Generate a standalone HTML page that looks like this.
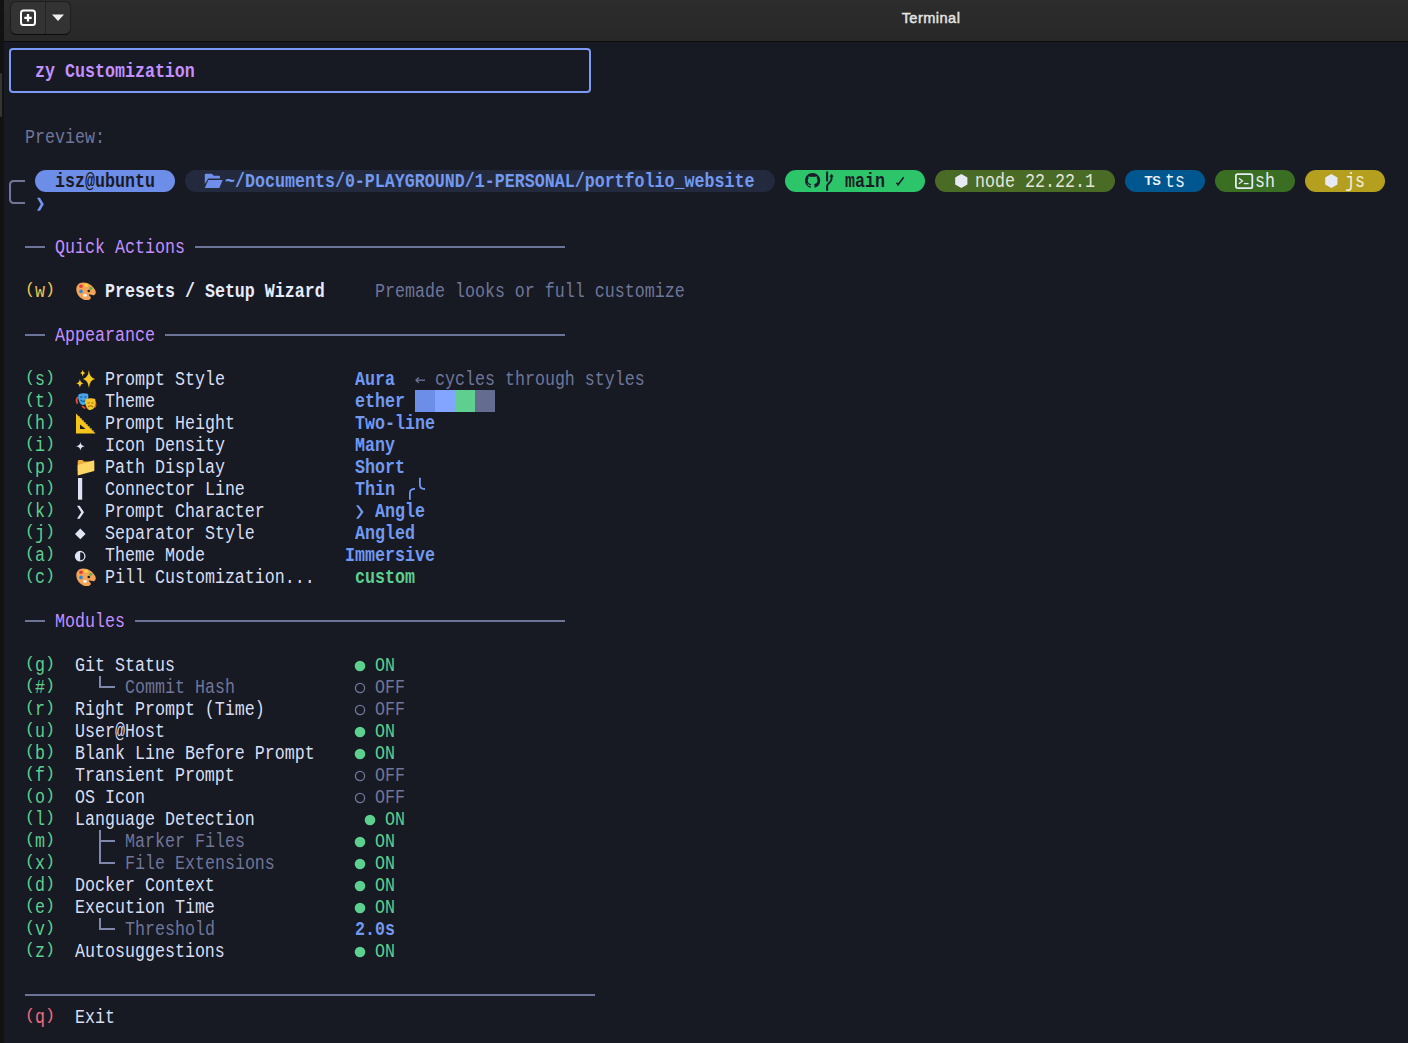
<!DOCTYPE html>
<html><head><meta charset="utf-8"><style>
html,body{margin:0;padding:0;}
body{width:1408px;height:1043px;overflow:hidden;position:relative;background:#171923;font-family:"Liberation Mono",monospace;}
.t{position:absolute;white-space:pre;font-size:19.3px;line-height:22px;transform:scaleX(0.86342);transform-origin:0 0;}
</style></head><body>
<div style="position:absolute;left:0;top:0;width:4px;height:1043px;background:#121212;"></div>
<div style="position:absolute;left:4px;top:0;width:1404px;height:41px;background:linear-gradient(#2c2c2c,#282828);"></div>
<div style="position:absolute;left:0;top:73px;width:1.5px;height:44px;background:#353535;border-radius:1px;"></div>
<div style="position:absolute;left:4px;top:41px;width:1404px;height:1px;background:#0b0b0b;"></div>
<div style="position:absolute;left:11px;top:2px;width:59px;height:32px;background:#333;border-radius:5px;box-shadow:0 0 0 1px rgba(0,0,0,0.3),0 1px 0 #111;"></div>
<div style="position:absolute;left:45px;top:2px;width:1px;height:32px;background:#222;"></div>
<svg style="position:absolute;left:19px;top:9px" width="18" height="18" viewBox="0 0 18 18"><rect x="2" y="1.5" width="14" height="14.5" rx="2.5" fill="none" stroke="#fff" stroke-width="2"/><path d="M9 5V12.5M5.3 8.8H12.7" stroke="#fff" stroke-width="2.3"/></svg>
<svg style="position:absolute;left:50px;top:13px" width="16" height="10" viewBox="0 0 16 10"><path d="M2 1.5H14L8 8Z" fill="#eee"/></svg>
<div style="position:absolute;left:871px;top:9.7px;width:120px;text-align:center;font-family:'Liberation Sans',sans-serif;font-weight:normal;-webkit-text-stroke:0.45px #e4e4e4;font-size:14.6px;letter-spacing:0.45px;color:#e4e4e4;">Terminal</div>
<div style="position:absolute;left:4px;top:42px;width:1404px;height:1001px;background:#171923;"></div>
<div style="position:absolute;left:9px;top:48px;width:578px;height:41px;border:2px solid #7a9af5;border-radius:4px;"></div>
<div class="t" style="left:35px;top:60.96427px;color:#c290ff;font-weight:bold;">zy Customization</div>
<div class="t" style="left:25px;top:126.96427px;color:#6f7699;">Preview:</div>
<svg style="position:absolute;left:8px;top:179px;" width="20" height="27" viewBox="0 0 20 27"><path d="M17 2 H6 Q2 2 2 6 V20 Q2 24 6 24 H17" fill="none" stroke="#70779a" stroke-width="2"/></svg>
<svg style="position:absolute;left:35px;top:196px;" width="12" height="16" viewBox="0 0 12 16"><path d="M2 1.8 H5 L8.8 8.3 L5 14.8 H2 L5.8 8.3 Z" fill="#7096f0"/></svg>
<div style="position:absolute;left:35px;top:170px;width:140px;height:22px;background:#6d8ee8;border-radius:11px;"></div>
<div class="t" style="left:55px;top:170.96427px;color:#1a1b26;font-weight:bold;">isz@ubuntu</div>
<div style="position:absolute;left:185px;top:170px;width:590px;height:22px;background:#242a3e;border-radius:11px;"></div>
<div class="t" style="left:225px;top:170.96427px;color:#7199f2;font-weight:bold;">~/Documents/0-PLAYGROUND/1-PERSONAL/portfolio_website</div>
<div style="position:absolute;left:785px;top:170px;width:140px;height:22px;background:#2cc56a;border-radius:11px;"></div>
<div class="t" style="left:845px;top:170.96427px;color:#1a1b26;font-weight:bold;">main</div>
<div style="position:absolute;left:935px;top:170px;width:180px;height:22px;background:#4a6b25;border-radius:11px;"></div>
<div class="t" style="left:975px;top:170.96427px;color:#e4e6dc;">node 22.22.1</div>
<div style="position:absolute;left:1125px;top:170px;width:80px;height:22px;background:#00578f;border-radius:11px;"></div>
<div class="t" style="left:1165px;top:170.96427px;color:#eef2f8;">ts</div>
<div style="position:absolute;left:1215px;top:170px;width:80px;height:22px;background:#3a6e22;border-radius:11px;"></div>
<div class="t" style="left:1255px;top:170.96427px;color:#e8ecf0;">sh</div>
<div style="position:absolute;left:1305px;top:170px;width:80px;height:22px;background:#b4a01e;border-radius:11px;"></div>
<div class="t" style="left:1345px;top:170.96427px;color:#f2f0e0;">js</div>
<div style="position:absolute;left:25px;top:246.0px;width:20px;height:2px;background:#6b7396;"></div>
<div class="t" style="left:55px;top:236.96427px;color:#c290ff;">Quick Actions</div>
<div style="position:absolute;left:195px;top:246.0px;width:370px;height:2px;background:#6b7396;"></div>
<div class="t" style="left:25px;top:280.16427px;color:#f0c450;transform:scale(0.86342,0.9);transform-origin:0 0;">(</div>
<div class="t" style="left:45px;top:280.16427px;color:#f0c450;transform:scale(0.86342,0.9);transform-origin:0 0;">)</div>
<div class="t" style="left:35px;top:280.96427px;color:#f0c450;">w</div>
<div class="t" style="left:105px;top:280.96427px;color:#e6ebff;font-weight:bold;">Presets / Setup Wizard</div>
<div class="t" style="left:375px;top:280.96427px;color:#6f7699;">Premade looks or full customize</div>
<div style="position:absolute;left:25px;top:334.0px;width:20px;height:2px;background:#6b7396;"></div>
<div class="t" style="left:55px;top:324.96427px;color:#c290ff;">Appearance</div>
<div style="position:absolute;left:165px;top:334.0px;width:400px;height:2px;background:#6b7396;"></div>
<div class="t" style="left:25px;top:368.16427px;color:#5cd08e;transform:scale(0.86342,0.9);transform-origin:0 0;">(</div>
<div class="t" style="left:45px;top:368.16427px;color:#5cd08e;transform:scale(0.86342,0.9);transform-origin:0 0;">)</div>
<div class="t" style="left:35px;top:368.96427px;color:#5cd08e;">s</div>
<div class="t" style="left:105px;top:368.96427px;color:#d8dff5;">Prompt Style</div>
<div class="t" style="left:355px;top:368.96427px;color:#7199f2;font-weight:bold;">Aura</div>
<div class="t" style="left:25px;top:390.16427px;color:#5cd08e;transform:scale(0.86342,0.9);transform-origin:0 0;">(</div>
<div class="t" style="left:45px;top:390.16427px;color:#5cd08e;transform:scale(0.86342,0.9);transform-origin:0 0;">)</div>
<div class="t" style="left:35px;top:390.96427px;color:#5cd08e;">t</div>
<div class="t" style="left:105px;top:390.96427px;color:#d8dff5;">Theme</div>
<div class="t" style="left:355px;top:390.96427px;color:#7199f2;font-weight:bold;">ether</div>
<div class="t" style="left:25px;top:412.16427px;color:#5cd08e;transform:scale(0.86342,0.9);transform-origin:0 0;">(</div>
<div class="t" style="left:45px;top:412.16427px;color:#5cd08e;transform:scale(0.86342,0.9);transform-origin:0 0;">)</div>
<div class="t" style="left:35px;top:412.96427px;color:#5cd08e;">h</div>
<div class="t" style="left:105px;top:412.96427px;color:#d8dff5;">Prompt Height</div>
<div class="t" style="left:355px;top:412.96427px;color:#7199f2;font-weight:bold;">Two-line</div>
<div class="t" style="left:25px;top:434.16427px;color:#5cd08e;transform:scale(0.86342,0.9);transform-origin:0 0;">(</div>
<div class="t" style="left:45px;top:434.16427px;color:#5cd08e;transform:scale(0.86342,0.9);transform-origin:0 0;">)</div>
<div class="t" style="left:35px;top:434.96427px;color:#5cd08e;">i</div>
<div class="t" style="left:105px;top:434.96427px;color:#d8dff5;">Icon Density</div>
<div class="t" style="left:355px;top:434.96427px;color:#7199f2;font-weight:bold;">Many</div>
<div class="t" style="left:25px;top:456.16427px;color:#5cd08e;transform:scale(0.86342,0.9);transform-origin:0 0;">(</div>
<div class="t" style="left:45px;top:456.16427px;color:#5cd08e;transform:scale(0.86342,0.9);transform-origin:0 0;">)</div>
<div class="t" style="left:35px;top:456.96427px;color:#5cd08e;">p</div>
<div class="t" style="left:105px;top:456.96427px;color:#d8dff5;">Path Display</div>
<div class="t" style="left:355px;top:456.96427px;color:#7199f2;font-weight:bold;">Short</div>
<div class="t" style="left:25px;top:478.16427px;color:#5cd08e;transform:scale(0.86342,0.9);transform-origin:0 0;">(</div>
<div class="t" style="left:45px;top:478.16427px;color:#5cd08e;transform:scale(0.86342,0.9);transform-origin:0 0;">)</div>
<div class="t" style="left:35px;top:478.96427px;color:#5cd08e;">n</div>
<div class="t" style="left:105px;top:478.96427px;color:#d8dff5;">Connector Line</div>
<div class="t" style="left:355px;top:478.96427px;color:#7199f2;font-weight:bold;">Thin</div>
<div class="t" style="left:25px;top:500.16427px;color:#5cd08e;transform:scale(0.86342,0.9);transform-origin:0 0;">(</div>
<div class="t" style="left:45px;top:500.16427px;color:#5cd08e;transform:scale(0.86342,0.9);transform-origin:0 0;">)</div>
<div class="t" style="left:35px;top:500.96427px;color:#5cd08e;">k</div>
<div class="t" style="left:105px;top:500.96427px;color:#d8dff5;">Prompt Character</div>
<div class="t" style="left:375px;top:500.96427px;color:#7199f2;font-weight:bold;">Angle</div>
<div class="t" style="left:25px;top:522.16427px;color:#5cd08e;transform:scale(0.86342,0.9);transform-origin:0 0;">(</div>
<div class="t" style="left:45px;top:522.16427px;color:#5cd08e;transform:scale(0.86342,0.9);transform-origin:0 0;">)</div>
<div class="t" style="left:35px;top:522.9642699999999px;color:#5cd08e;">j</div>
<div class="t" style="left:105px;top:522.9642699999999px;color:#d8dff5;">Separator Style</div>
<div class="t" style="left:355px;top:522.9642699999999px;color:#7199f2;font-weight:bold;">Angled</div>
<div class="t" style="left:25px;top:544.16427px;color:#5cd08e;transform:scale(0.86342,0.9);transform-origin:0 0;">(</div>
<div class="t" style="left:45px;top:544.16427px;color:#5cd08e;transform:scale(0.86342,0.9);transform-origin:0 0;">)</div>
<div class="t" style="left:35px;top:544.9642699999999px;color:#5cd08e;">a</div>
<div class="t" style="left:105px;top:544.9642699999999px;color:#d8dff5;">Theme Mode</div>
<div class="t" style="left:345px;top:544.9642699999999px;color:#7199f2;font-weight:bold;">Immersive</div>
<div class="t" style="left:25px;top:566.16427px;color:#5cd08e;transform:scale(0.86342,0.9);transform-origin:0 0;">(</div>
<div class="t" style="left:45px;top:566.16427px;color:#5cd08e;transform:scale(0.86342,0.9);transform-origin:0 0;">)</div>
<div class="t" style="left:35px;top:566.9642699999999px;color:#5cd08e;">c</div>
<div class="t" style="left:105px;top:566.9642699999999px;color:#d8dff5;">Pill Customization...</div>
<div class="t" style="left:355px;top:566.9642699999999px;color:#5cd08e;font-weight:bold;">custom</div>
<div class="t" style="left:435px;top:368.96427px;color:#6f7699;">cycles through styles</div>
<svg style="position:absolute;left:413px;top:374px;" width="14" height="12" viewBox="0 0 14 12"><path d="M3 6.2 H12" stroke="#6f7699" stroke-width="1.3"/><path d="M5.8 3.5 L3 6.2 L5.8 8.9" fill="none" stroke="#6f7699" stroke-width="1.3"/></svg>
<div style="position:absolute;left:415px;top:390px;width:20px;height:22px;background:#6d8ee8;"></div>
<div style="position:absolute;left:435px;top:390px;width:20px;height:22px;background:#82a6ff;"></div>
<div style="position:absolute;left:455px;top:390px;width:20px;height:22px;background:#5fcf8f;"></div>
<div style="position:absolute;left:475px;top:390px;width:20px;height:22px;background:#646d8f;"></div>
<div style="position:absolute;left:25px;top:620.0px;width:20px;height:2px;background:#6b7396;"></div>
<div class="t" style="left:55px;top:610.9642699999999px;color:#c290ff;">Modules</div>
<div style="position:absolute;left:135px;top:620.0px;width:430px;height:2px;background:#6b7396;"></div>
<div class="t" style="left:25px;top:654.16427px;color:#5cd08e;transform:scale(0.86342,0.9);transform-origin:0 0;">(</div>
<div class="t" style="left:45px;top:654.16427px;color:#5cd08e;transform:scale(0.86342,0.9);transform-origin:0 0;">)</div>
<div class="t" style="left:35px;top:654.9642699999999px;color:#5cd08e;">g</div>
<div class="t" style="left:75px;top:654.9642699999999px;color:#d8dff5;">Git Status</div>
<svg style="position:absolute;left:353.1px;top:659.2px;" width="14" height="14" viewBox="0 0 14 14"><circle cx="7" cy="7" r="5.3" fill="#5cd08e"/></svg>
<div class="t" style="left:375px;top:654.9642699999999px;color:#5cd08e;">ON</div>
<div class="t" style="left:25px;top:676.16427px;color:#5cd08e;transform:scale(0.86342,0.9);transform-origin:0 0;">(</div>
<div class="t" style="left:45px;top:676.16427px;color:#5cd08e;transform:scale(0.86342,0.9);transform-origin:0 0;">)</div>
<div class="t" style="left:35px;top:676.9642699999999px;color:#5cd08e;">#</div>
<div style="position:absolute;left:99px;top:676px;width:2px;height:12px;background:#7f87aa;"></div>
<div style="position:absolute;left:99px;top:686px;width:16px;height:2px;background:#7f87aa;"></div>
<div class="t" style="left:125px;top:676.9642699999999px;color:#6f7699;">Commit Hash</div>
<svg style="position:absolute;left:353.1px;top:681.4px;" width="14" height="14" viewBox="0 0 14 14"><circle cx="7" cy="7" r="4.6" fill="none" stroke="#6f7699" stroke-width="1.3"/></svg>
<div class="t" style="left:375px;top:676.9642699999999px;color:#6f7699;">OFF</div>
<div class="t" style="left:25px;top:698.16427px;color:#5cd08e;transform:scale(0.86342,0.9);transform-origin:0 0;">(</div>
<div class="t" style="left:45px;top:698.16427px;color:#5cd08e;transform:scale(0.86342,0.9);transform-origin:0 0;">)</div>
<div class="t" style="left:35px;top:698.9642699999999px;color:#5cd08e;">r</div>
<div class="t" style="left:75px;top:698.9642699999999px;color:#d8dff5;">Right Prompt (Time)</div>
<svg style="position:absolute;left:353.1px;top:703.4px;" width="14" height="14" viewBox="0 0 14 14"><circle cx="7" cy="7" r="4.6" fill="none" stroke="#6f7699" stroke-width="1.3"/></svg>
<div class="t" style="left:375px;top:698.9642699999999px;color:#6f7699;">OFF</div>
<div class="t" style="left:25px;top:720.16427px;color:#5cd08e;transform:scale(0.86342,0.9);transform-origin:0 0;">(</div>
<div class="t" style="left:45px;top:720.16427px;color:#5cd08e;transform:scale(0.86342,0.9);transform-origin:0 0;">)</div>
<div class="t" style="left:35px;top:720.9642699999999px;color:#5cd08e;">u</div>
<div class="t" style="left:75px;top:720.9642699999999px;color:#d8dff5;">User@Host</div>
<svg style="position:absolute;left:353.1px;top:725.2px;" width="14" height="14" viewBox="0 0 14 14"><circle cx="7" cy="7" r="5.3" fill="#5cd08e"/></svg>
<div class="t" style="left:375px;top:720.9642699999999px;color:#5cd08e;">ON</div>
<div class="t" style="left:25px;top:742.16427px;color:#5cd08e;transform:scale(0.86342,0.9);transform-origin:0 0;">(</div>
<div class="t" style="left:45px;top:742.16427px;color:#5cd08e;transform:scale(0.86342,0.9);transform-origin:0 0;">)</div>
<div class="t" style="left:35px;top:742.9642699999999px;color:#5cd08e;">b</div>
<div class="t" style="left:75px;top:742.9642699999999px;color:#d8dff5;">Blank Line Before Prompt</div>
<svg style="position:absolute;left:353.1px;top:747.2px;" width="14" height="14" viewBox="0 0 14 14"><circle cx="7" cy="7" r="5.3" fill="#5cd08e"/></svg>
<div class="t" style="left:375px;top:742.9642699999999px;color:#5cd08e;">ON</div>
<div class="t" style="left:25px;top:764.16427px;color:#5cd08e;transform:scale(0.86342,0.9);transform-origin:0 0;">(</div>
<div class="t" style="left:45px;top:764.16427px;color:#5cd08e;transform:scale(0.86342,0.9);transform-origin:0 0;">)</div>
<div class="t" style="left:35px;top:764.9642699999999px;color:#5cd08e;">f</div>
<div class="t" style="left:75px;top:764.9642699999999px;color:#d8dff5;">Transient Prompt</div>
<svg style="position:absolute;left:353.1px;top:769.4px;" width="14" height="14" viewBox="0 0 14 14"><circle cx="7" cy="7" r="4.6" fill="none" stroke="#6f7699" stroke-width="1.3"/></svg>
<div class="t" style="left:375px;top:764.9642699999999px;color:#6f7699;">OFF</div>
<div class="t" style="left:25px;top:786.16427px;color:#5cd08e;transform:scale(0.86342,0.9);transform-origin:0 0;">(</div>
<div class="t" style="left:45px;top:786.16427px;color:#5cd08e;transform:scale(0.86342,0.9);transform-origin:0 0;">)</div>
<div class="t" style="left:35px;top:786.9642699999999px;color:#5cd08e;">o</div>
<div class="t" style="left:75px;top:786.9642699999999px;color:#d8dff5;">OS Icon</div>
<svg style="position:absolute;left:353.1px;top:791.4px;" width="14" height="14" viewBox="0 0 14 14"><circle cx="7" cy="7" r="4.6" fill="none" stroke="#6f7699" stroke-width="1.3"/></svg>
<div class="t" style="left:375px;top:786.9642699999999px;color:#6f7699;">OFF</div>
<div class="t" style="left:25px;top:808.16427px;color:#5cd08e;transform:scale(0.86342,0.9);transform-origin:0 0;">(</div>
<div class="t" style="left:45px;top:808.16427px;color:#5cd08e;transform:scale(0.86342,0.9);transform-origin:0 0;">)</div>
<div class="t" style="left:35px;top:808.9642699999999px;color:#5cd08e;">l</div>
<div class="t" style="left:75px;top:808.9642699999999px;color:#d8dff5;">Language Detection</div>
<svg style="position:absolute;left:363.1px;top:813.2px;" width="14" height="14" viewBox="0 0 14 14"><circle cx="7" cy="7" r="5.3" fill="#5cd08e"/></svg>
<div class="t" style="left:385px;top:808.9642699999999px;color:#5cd08e;">ON</div>
<div class="t" style="left:25px;top:830.16427px;color:#5cd08e;transform:scale(0.86342,0.9);transform-origin:0 0;">(</div>
<div class="t" style="left:45px;top:830.16427px;color:#5cd08e;transform:scale(0.86342,0.9);transform-origin:0 0;">)</div>
<div class="t" style="left:35px;top:830.9642699999999px;color:#5cd08e;">m</div>
<div style="position:absolute;left:99px;top:830px;width:2px;height:22px;background:#7f87aa;"></div>
<div style="position:absolute;left:99px;top:840px;width:16px;height:2px;background:#7f87aa;"></div>
<div class="t" style="left:125px;top:830.9642699999999px;color:#6f7699;">Marker Files</div>
<svg style="position:absolute;left:353.1px;top:835.2px;" width="14" height="14" viewBox="0 0 14 14"><circle cx="7" cy="7" r="5.3" fill="#5cd08e"/></svg>
<div class="t" style="left:375px;top:830.9642699999999px;color:#5cd08e;">ON</div>
<div class="t" style="left:25px;top:852.16427px;color:#5cd08e;transform:scale(0.86342,0.9);transform-origin:0 0;">(</div>
<div class="t" style="left:45px;top:852.16427px;color:#5cd08e;transform:scale(0.86342,0.9);transform-origin:0 0;">)</div>
<div class="t" style="left:35px;top:852.9642699999999px;color:#5cd08e;">x</div>
<div style="position:absolute;left:99px;top:852px;width:2px;height:12px;background:#7f87aa;"></div>
<div style="position:absolute;left:99px;top:862px;width:16px;height:2px;background:#7f87aa;"></div>
<div class="t" style="left:125px;top:852.9642699999999px;color:#6f7699;">File Extensions</div>
<svg style="position:absolute;left:353.1px;top:857.2px;" width="14" height="14" viewBox="0 0 14 14"><circle cx="7" cy="7" r="5.3" fill="#5cd08e"/></svg>
<div class="t" style="left:375px;top:852.9642699999999px;color:#5cd08e;">ON</div>
<div class="t" style="left:25px;top:874.16427px;color:#5cd08e;transform:scale(0.86342,0.9);transform-origin:0 0;">(</div>
<div class="t" style="left:45px;top:874.16427px;color:#5cd08e;transform:scale(0.86342,0.9);transform-origin:0 0;">)</div>
<div class="t" style="left:35px;top:874.9642699999999px;color:#5cd08e;">d</div>
<div class="t" style="left:75px;top:874.9642699999999px;color:#d8dff5;">Docker Context</div>
<svg style="position:absolute;left:353.1px;top:879.2px;" width="14" height="14" viewBox="0 0 14 14"><circle cx="7" cy="7" r="5.3" fill="#5cd08e"/></svg>
<div class="t" style="left:375px;top:874.9642699999999px;color:#5cd08e;">ON</div>
<div class="t" style="left:25px;top:896.16427px;color:#5cd08e;transform:scale(0.86342,0.9);transform-origin:0 0;">(</div>
<div class="t" style="left:45px;top:896.16427px;color:#5cd08e;transform:scale(0.86342,0.9);transform-origin:0 0;">)</div>
<div class="t" style="left:35px;top:896.9642699999999px;color:#5cd08e;">e</div>
<div class="t" style="left:75px;top:896.9642699999999px;color:#d8dff5;">Execution Time</div>
<svg style="position:absolute;left:353.1px;top:901.2px;" width="14" height="14" viewBox="0 0 14 14"><circle cx="7" cy="7" r="5.3" fill="#5cd08e"/></svg>
<div class="t" style="left:375px;top:896.9642699999999px;color:#5cd08e;">ON</div>
<div class="t" style="left:25px;top:918.16427px;color:#5cd08e;transform:scale(0.86342,0.9);transform-origin:0 0;">(</div>
<div class="t" style="left:45px;top:918.16427px;color:#5cd08e;transform:scale(0.86342,0.9);transform-origin:0 0;">)</div>
<div class="t" style="left:35px;top:918.9642699999999px;color:#5cd08e;">v</div>
<div style="position:absolute;left:99px;top:918px;width:2px;height:12px;background:#7f87aa;"></div>
<div style="position:absolute;left:99px;top:928px;width:16px;height:2px;background:#7f87aa;"></div>
<div class="t" style="left:125px;top:918.9642699999999px;color:#6f7699;">Threshold</div>
<div class="t" style="left:355px;top:918.9642699999999px;color:#7199f2;font-weight:bold;">2.0s</div>
<div class="t" style="left:25px;top:940.16427px;color:#5cd08e;transform:scale(0.86342,0.9);transform-origin:0 0;">(</div>
<div class="t" style="left:45px;top:940.16427px;color:#5cd08e;transform:scale(0.86342,0.9);transform-origin:0 0;">)</div>
<div class="t" style="left:35px;top:940.9642699999999px;color:#5cd08e;">z</div>
<div class="t" style="left:75px;top:940.9642699999999px;color:#d8dff5;">Autosuggestions</div>
<svg style="position:absolute;left:353.1px;top:945.2px;" width="14" height="14" viewBox="0 0 14 14"><circle cx="7" cy="7" r="5.3" fill="#5cd08e"/></svg>
<div class="t" style="left:375px;top:940.9642699999999px;color:#5cd08e;">ON</div>
<div style="position:absolute;left:25px;top:994.0px;width:570px;height:2px;background:#6b7396;"></div>
<div class="t" style="left:25px;top:1006.16427px;color:#f06b7e;transform:scale(0.86342,0.9);transform-origin:0 0;">(</div>
<div class="t" style="left:45px;top:1006.16427px;color:#f06b7e;transform:scale(0.86342,0.9);transform-origin:0 0;">)</div>
<div class="t" style="left:35px;top:1006.9642699999999px;color:#f06b7e;">q</div>
<div class="t" style="left:75px;top:1006.9642699999999px;color:#d8dff5;">Exit</div>
<svg style="position:absolute;left:76px;top:282px;" width="21" height="19" viewBox="0 0 21 19"><path d="M7 0.4 C12 0.2 17 3.5 19.3 8.3 C20.4 11 19.4 13.4 17 13.3 C15.5 13.2 14 12.3 13 12.6 C12 13 14.6 14.2 14.8 15.8 C15 17.6 12 18.5 9 17.9 C4.5 17 0.3 12.5 0.3 7.5 C0.3 3 3 0.5 7 0.4 Z" fill="#f4a457"/>
<circle cx="12.8" cy="9" r="1.3" fill="#171923"/>
<circle cx="5" cy="4.3" r="1.8" fill="#e8383a"/><circle cx="10.1" cy="3.2" r="1.6" fill="#f8d838"/>
<circle cx="14.8" cy="6.2" r="1.5" fill="#4cb848"/><circle cx="5" cy="9.4" r="1.8" fill="#2a88d8"/>
<ellipse cx="9" cy="13.3" rx="1.9" ry="1.5" fill="#f0f4f8"/></svg>
<svg style="position:absolute;left:76px;top:568px;" width="21" height="19" viewBox="0 0 21 19"><path d="M7 0.4 C12 0.2 17 3.5 19.3 8.3 C20.4 11 19.4 13.4 17 13.3 C15.5 13.2 14 12.3 13 12.6 C12 13 14.6 14.2 14.8 15.8 C15 17.6 12 18.5 9 17.9 C4.5 17 0.3 12.5 0.3 7.5 C0.3 3 3 0.5 7 0.4 Z" fill="#f4a457"/>
<circle cx="12.8" cy="9" r="1.3" fill="#171923"/>
<circle cx="5" cy="4.3" r="1.8" fill="#e8383a"/><circle cx="10.1" cy="3.2" r="1.6" fill="#f8d838"/>
<circle cx="14.8" cy="6.2" r="1.5" fill="#4cb848"/><circle cx="5" cy="9.4" r="1.8" fill="#2a88d8"/>
<ellipse cx="9" cy="13.3" rx="1.9" ry="1.5" fill="#f0f4f8"/></svg>
<svg style="position:absolute;left:74px;top:368px;" width="24" height="22" viewBox="0 0 24 22"><path d="M14.9 2 Q15.644 9.92 21.1 11 Q15.644 12.08 14.9 20 Q14.156 12.08 8.7 11 Q14.156 9.92 14.9 2 Z M8.7 1.7999999999999998 Q9.011999999999999 4.704 11.299999999999999 5.1 Q9.011999999999999 5.4959999999999996 8.7 8.399999999999999 Q8.388 5.4959999999999996 6.1 5.1 Q8.388 4.704 8.7 1.7999999999999998 Z M5.9 10.9 Q6.368 14.772 9.8 15.3 Q6.368 15.828000000000001 5.9 19.700000000000003 Q5.432 15.828000000000001 2.0000000000000004 15.3 Q5.432 14.772 5.9 10.9 Z" fill="#f8c623"/></svg>
<svg style="position:absolute;left:74px;top:390px;" width="24" height="22" viewBox="0 0 24 22"><path d="M3.6 7.5 Q1.6 10 3.2 13 M8.5 16.5 L10.8 18 M20.6 11.5 Q22.4 14 21 16.8" stroke="#e2502c" stroke-width="1.7" fill="none" stroke-linecap="round"/>
<path d="M4.3 4.6 Q9 2.2 14.2 4 Q14.8 10 12.2 13.6 Q9.6 16.2 7 14.2 Q3.8 11.6 4.3 4.6 Z" fill="#48a6e6"/>
<path d="M6.3 7.3 Q7.3 6.3 8.3 7.3 M10.3 7.3 Q11.3 6.3 12.3 7.3 M6.5 9.8 Q9 13 12.2 9.8" stroke="#1c5a8c" stroke-width="1.1" fill="none"/>
<path d="M11.3 9.6 Q16 7.2 21.2 9 Q22.2 15 19.6 18.6 Q16.6 21.2 14 19.2 Q10.8 16.6 11.3 9.6 Z" fill="#f7c52a"/>
<path d="M13.6 12.6 Q14.6 13.4 15.6 12.6 M17.4 12.6 Q18.4 13.4 19.4 12.6 M14 17 Q16.5 14.5 19 17" stroke="#a06c12" stroke-width="1.1" fill="none"/></svg>
<svg style="position:absolute;left:75px;top:412px;" width="22" height="23" viewBox="0 0 22 23"><path d="M1 1.5 L20.5 21.5 H1 Z" fill="#f6c51b"/><path d="M5 12.5 L10.6 17 H5 Z" fill="#171923"/>
<path d="M4 5 l1 -1 M6 7 l1 -1 M8 9 l1 -1 M10 11 l1 -1 M12 13 l1 -1 M14 15 l1 -1 M16 17 l1 -1 M18 19 l1 -1" stroke="#b8860b" stroke-width="0.8"/></svg>
<svg style="position:absolute;left:74px;top:440px;" width="13" height="13" viewBox="0 0 13 13"><path d="M6.4 1.9000000000000004 Q6.916 5.684 10.7 6.2 Q6.916 6.716 6.4 10.5 Q5.884 6.716 2.1000000000000005 6.2 Q5.884 5.684 6.4 1.9000000000000004 Z" fill="#dfe5f5"/></svg>
<svg style="position:absolute;left:76px;top:458px;" width="20" height="20" viewBox="0 0 20 20"><path d="M1.7 3.5 Q1.7 2 3 2 H6.5 L8 3.5 H17 Q18.2 3.5 18.2 4.7 V13 H1.7 Z" fill="#eeac3a"/>
<path d="M1.7 7 L18.2 2.2 V13 L1.7 17.5 Z" fill="#fdd663"/></svg>
<svg style="position:absolute;left:76px;top:476px;" width="8" height="26" viewBox="0 0 8 26"><rect x="2" y="2" width="4.2" height="21.7" fill="#dde2f5"/></svg>
<svg style="position:absolute;left:74px;top:502px;" width="12" height="20" viewBox="0 0 12 20"><path d="M3 3.7 H5.6 L10 10.2 L5.6 16.7 H3 L7.2 10.2 Z" fill="#dfe5f5"/></svg>
<svg style="position:absolute;left:72px;top:526px;" width="16" height="16" viewBox="0 0 16 16"><path d="M8.3 2.6 L13.6 7.9 L8.3 13.2 L3 7.9 Z" fill="#dfe5f5"/></svg>
<svg style="position:absolute;left:72px;top:548px;" width="16" height="16" viewBox="0 0 16 16"><circle cx="8.2" cy="8.2" r="4.7" fill="none" stroke="#dfe5f5" stroke-width="1.3"/><path d="M8.2 3.5 A4.7 4.7 0 0 0 8.2 12.9 Z" fill="#dfe5f5"/></svg>
<svg style="position:absolute;left:405px;top:475px;" width="24" height="28" viewBox="0 0 24 28"><path d="M4.9 24.8 V18 Q4.9 13.8 10 13.8 M14.9 2.8 V10 Q14.9 14 20 14" fill="none" stroke="#7199f2" stroke-width="1.8"/></svg>
<svg style="position:absolute;left:354px;top:502px;" width="12" height="20" viewBox="0 0 12 20"><path d="M2 3.2 H4.6 L9.6 10 L4.6 16.8 H2 L6.8 10 Z" fill="#7199f2"/></svg>
<svg style="position:absolute;left:204px;top:173px;" width="20" height="16" viewBox="0 0 20 16"><path d="M0.8 11 V1.8 Q0.8 0.8 1.8 0.8 H7.9 L9.7 2.7 H15 Q16 2.7 16 3.7 V5.6 H4.3 Z" fill="#6e8eea"/>
<path d="M4.3 6.9 H18.7 L15.3 14.9 H0.8 Z" fill="#6e8eea"/></svg>
<svg style="position:absolute;left:805px;top:173px;" width="16" height="16" viewBox="0 0 16 16"><path transform="scale(0.95)" d="M8 0C3.58 0 0 3.58 0 8c0 3.54 2.29 6.53 5.47 7.59.4.07.55-.17.55-.38 0-.19-.01-.82-.01-1.49-2.01.37-2.53-.49-2.69-.94-.09-.23-.48-.94-.82-1.13-.28-.15-.68-.52-.01-.53.63-.01 1.08.58 1.23.82.72 1.21 1.870.87 2.33.66.07-.52.28-.87.51-1.07-1.780-.2-3.64-.89-3.64-3.95 0-.87.31-1.59.82-2.15-.08-.2-.36-1.02.08-2.12 0 0 .67-.21 2.2.82.64-.18 1.32-.27 2-.27.68 0 1.36.09 2 .27 1.53-1.04 2.2-.82 2.2-.82.44 1.1.16 1.92.08 2.12.51.56.82 1.27.82 2.15 0 3.07-1.87 3.750-3.65 3.95.29.25.54.73.54 1.48 0 1.07-.01 1.93-.01 2.2 0 .21.15.46.55.38A8.013 8.013 0 0016 8c0-4.42-3.58-8-8-8z" fill="#1b1d2b"/></svg>
<svg style="position:absolute;left:822px;top:170px;" width="14" height="22" viewBox="0 0 14 22"><path d="M5.1 1.4 V11.5 M5.1 20.7 V16 C5.1 13.2 9.5 12.5 9.5 9 V6" fill="none" stroke="#1b1d2b" stroke-width="2"/><path d="M7.3 6.8 L9.5 3.7 L11.7 6.8 Z" fill="#1b1d2b"/></svg>
<svg style="position:absolute;left:893px;top:174px;" width="14" height="14" viewBox="0 0 14 14"><path d="M3.6 8.6 L5 10.8 L10.7 3.2" fill="none" stroke="#1b1d2b" stroke-width="1.6"/></svg>
<svg style="position:absolute;left:954.7px;top:174px;" width="13" height="14" viewBox="0 0 13 14"><path d="M6.3 0 L12.4 3.4 V10.6 L6.3 14 L0.2 10.6 V3.4 Z" fill="#e6eaf5"/></svg>
<svg style="position:absolute;left:1324.6px;top:174px;" width="13" height="14" viewBox="0 0 13 14"><path d="M6.3 0 L12.4 3.4 V10.6 L6.3 14 L0.2 10.6 V3.4 Z" fill="#e6eaf5"/></svg>
<svg style="position:absolute;left:1143px;top:172px;" width="20" height="18" viewBox="0 0 20 18"><text x="1.5" y="13.4" font-family="Liberation Sans" font-weight="bold" font-size="13" fill="#eef2f8" letter-spacing="-0.3">TS</text></svg>
<svg style="position:absolute;left:1234px;top:172px;" width="20" height="18" viewBox="0 0 20 18"><rect x="1.9" y="2.2" width="16.4" height="14" rx="1.8" fill="none" stroke="#e8ecf5" stroke-width="1.8"/><path d="M4.9 6.2 L8.5 9 L4.9 11.8" fill="none" stroke="#e8ecf5" stroke-width="1.3"/><path d="M9.8 11.6 H14.6" stroke="#e8ecf5" stroke-width="1.3"/></svg>
</body></html>
